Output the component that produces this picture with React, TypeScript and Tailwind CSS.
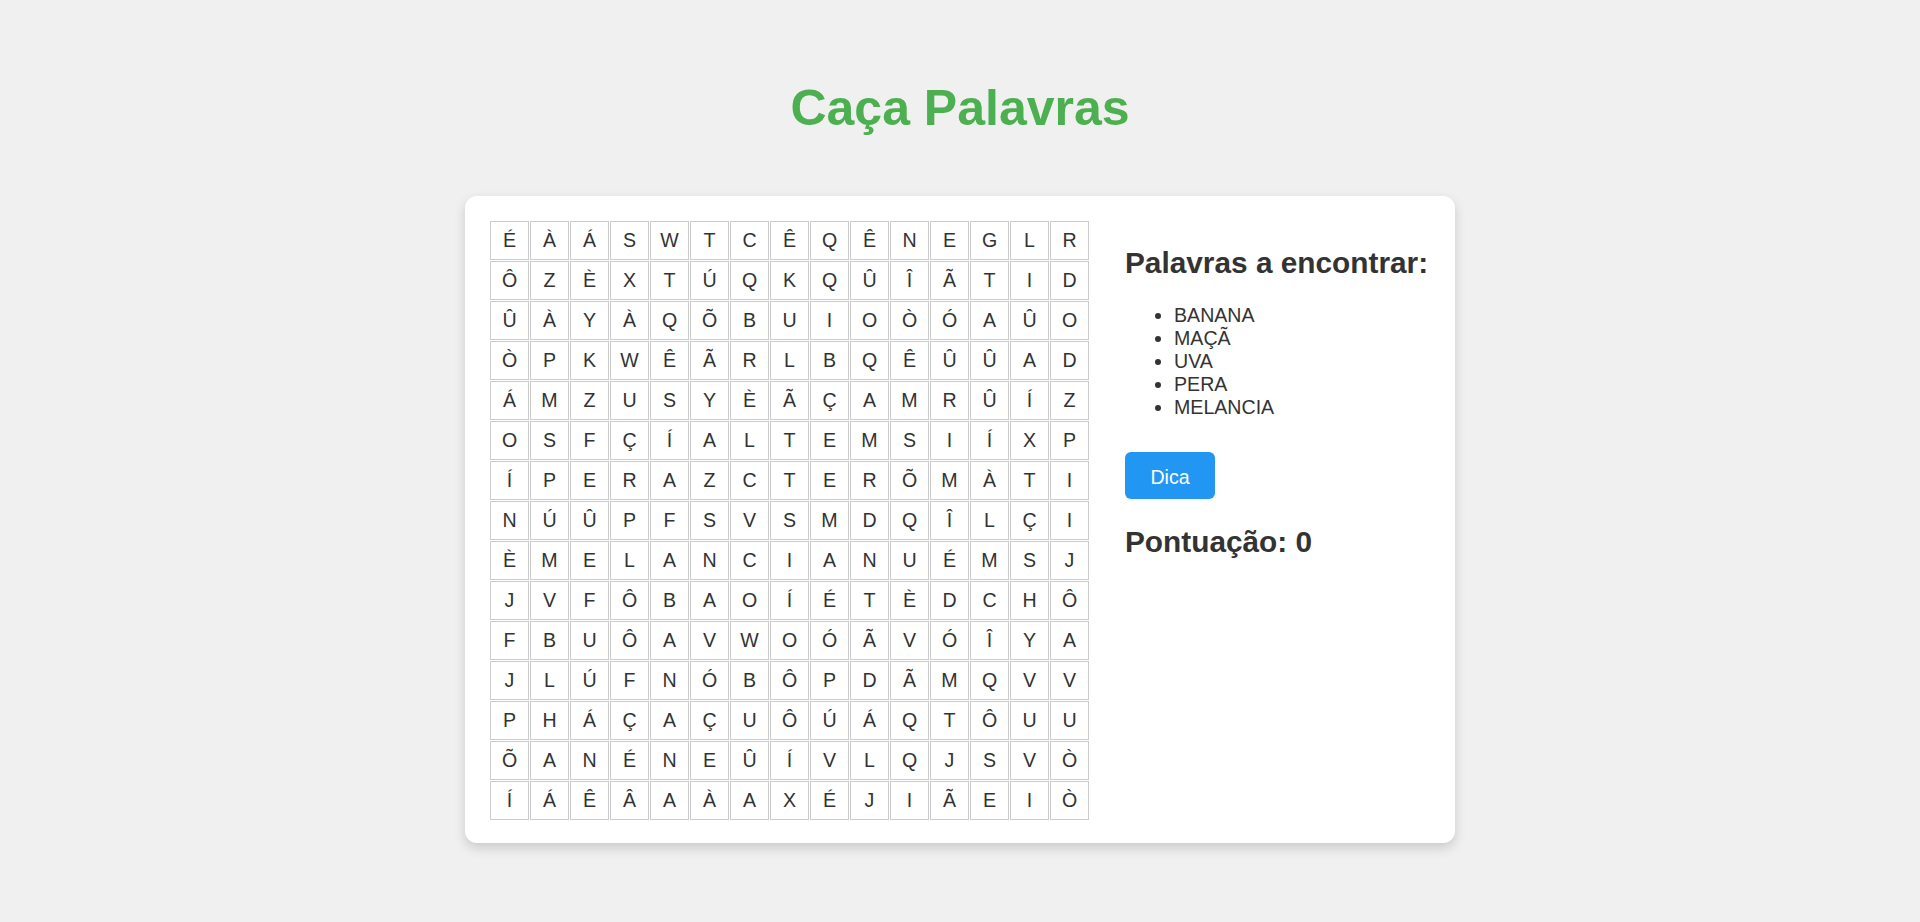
const grid = [
  "ÉÀÁSWTCÊQÊNEGLR",
  "ÔZÈXTÚQKQÛÎÃTID",
  "ÛÀYÀQÕBUIOÒÓAÛO",
  "ÒPKWÊÃRLBQÊÛÛAD",
  "ÁMZUSYÈÃÇAMRÛÍZ",
  "OSFÇÍALTEMSIÍXP",
  "ÍPERAZCTERÕMÀTI",
  "NÚÛPFSVSMDQÎLÇI",
  "ÈMELANCIANUÉMSJ",
  "JVFÔBAOÍÉTÈDCHÔ",
  "FBUÔAVWOÓÃVÓÎYA",
  "JLÚFNÓBÔPDÃMQVV",
  "PHÁÇAÇUÔÚÁQTÔUU",
  "ÕANÉNEÛÍVLQJSVÒ",
  "ÍÁÊÂAÀAXÉJIÃEIÒ",
];

const words = ["BANANA", "MAÇÃ", "UVA", "PERA", "MELANCIA"];

export default function App() {
  return (
    <div className="min-h-screen bg-[#f0f0f0] flex flex-col items-center font-['Liberation_Sans',Arial,sans-serif] text-[#333]">
      <h1 className="mt-[80px] text-[50px] leading-[57px] font-bold text-[#4CAF50]">Caça Palavras</h1>

      {/* Card */}
      <div className="mt-[59px] w-[990px] bg-white rounded-[12px] shadow-[0_5px_12px_rgba(0,0,0,0.16)] pt-[25px] pb-[23px] px-[25px] flex items-start">
        <div className="grid shrink-0 grid-cols-[repeat(15,39px)] gap-px">
          {grid.map((row, r) =>
            Array.from(row).map((ch, c) => (
              <div
                key={`${r}-${c}`}
                className="w-[39px] h-[39px] border border-[#cccccc] flex items-center justify-center text-[19.6px] leading-[22.5px]"
              >
                {ch}
              </div>
            ))
          )}
        </div>

        <div className="ml-[36px] flex flex-col items-start whitespace-nowrap">
          <h2 className="mt-[25px] text-[29.8px] leading-[34px] font-bold">Palavras a encontrar:</h2>
          <ul className="mt-[24px] list-disc pl-[49px] text-[19.6px] leading-[23px]">
            {words.map((w) => (
              <li key={w}>{w}</li>
            ))}
          </ul>
          <button className="mt-[33px] h-[47px] w-[90px] bg-[#2196F3] text-white text-[19.6px] leading-[22px] pt-[2px] rounded-[6px]">
            Dica
          </button>
          <h2 className="mt-[26px] text-[29.8px] leading-[34px] font-bold">Pontuação: 0</h2>
        </div>
      </div>
    </div>
  );
}
